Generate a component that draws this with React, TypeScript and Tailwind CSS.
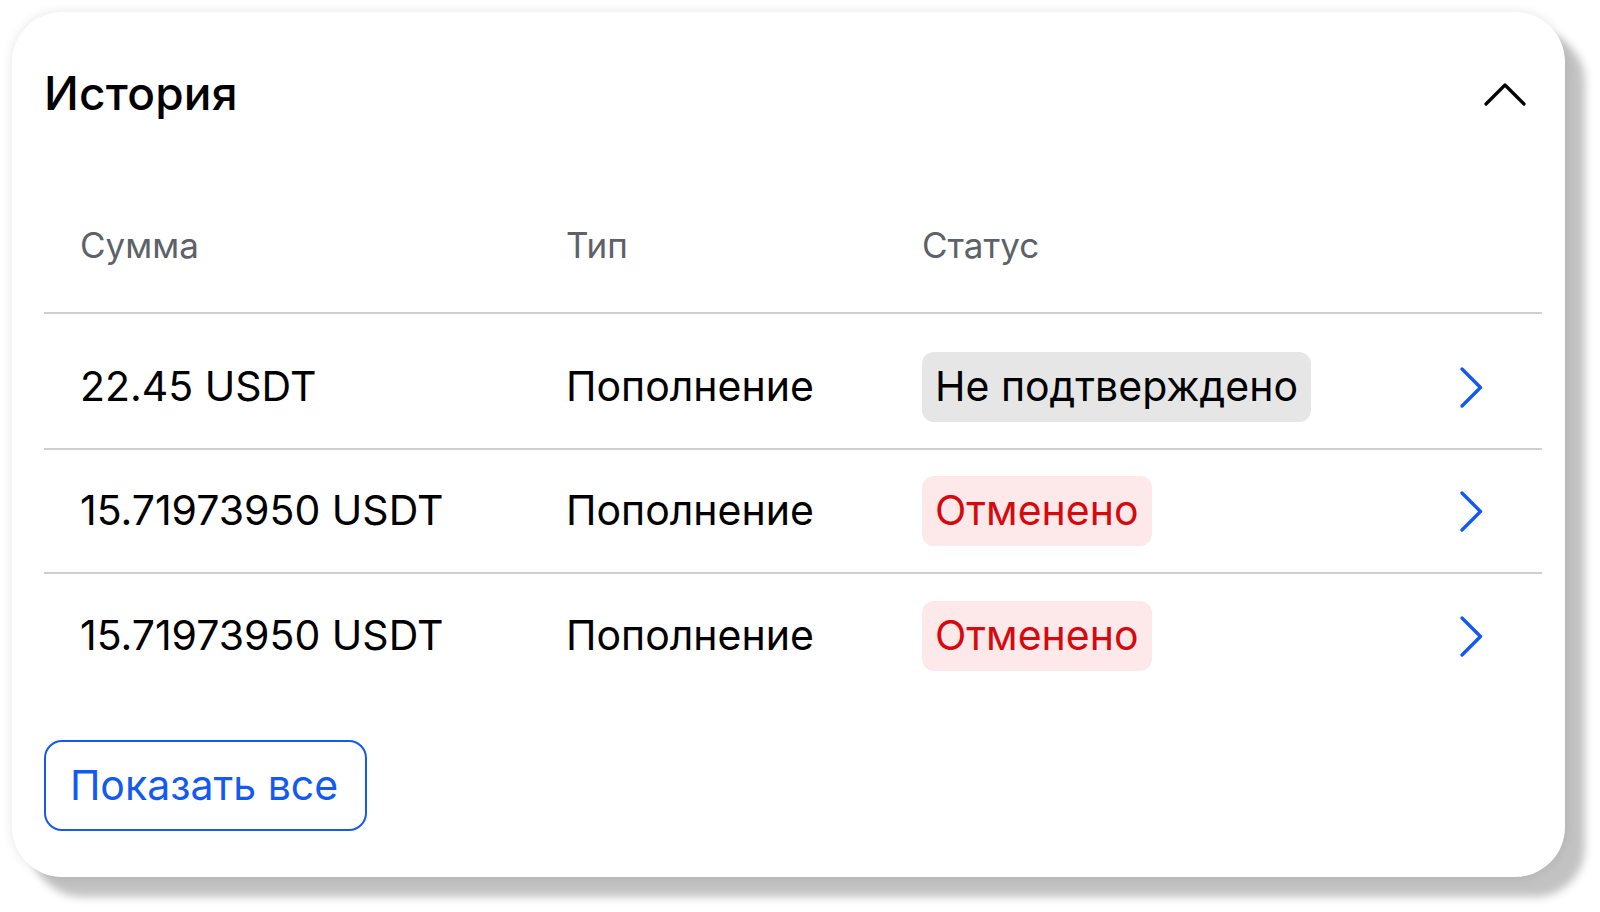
import React from 'react';

const rows = [
  { amount: '22.45 USDT', type: 'Пополнение', status: 'Не подтверждено', kind: 'pending' },
  { amount: '15.71973950 USDT', type: 'Пополнение', status: 'Отменено', kind: 'cancelled' },
  { amount: '15.71973950 USDT', type: 'Пополнение', status: 'Отменено', kind: 'cancelled' },
];

function ChevronRight() {
  return (
    <svg width="25" height="43" viewBox="0 0 25 43" fill="none">
      <polyline points="3,3 21.5,21.5 3,40" stroke="#1459f0" strokeWidth="3.4" strokeLinecap="round" strokeLinejoin="round" />
    </svg>
  );
}

export default function App() {
  return (
    <div className="w-[1600px] h-[912px] bg-white p-3 font-['Inter','Noto_Sans',sans-serif]">
      <div className="w-[1553px] h-[865px] bg-white rounded-[50px] shadow-[0_0_12px_rgba(0,0,0,0.1),20px_20px_8px_rgba(0,0,0,0.24)] pl-8 pr-[23px] flex flex-col">
        {/* Header */}
        <div className="h-[162px] flex items-center justify-between">
          <h2 className="text-[46px] font-medium text-black tracking-[0.2px]">История</h2>
          <button className="mr-[14px] mt-[2px]">
            <svg width="46" height="28" viewBox="0 0 46 28" fill="none">
              <polyline points="4,24 23,5 42,24" stroke="#000" strokeWidth="3.2" strokeLinecap="round" strokeLinejoin="round" />
            </svg>
          </button>
        </div>

        {/* Table head */}
        <div className="h-[140px] pt-[4px] flex items-center border-b-2 border-[#cfcfcf] pl-9 text-[35px] text-[#5d6168]">
          <div className="w-[486px]">Сумма</div>
          <div className="w-[356px]">Тип</div>
          <div>Статус</div>
        </div>

        {/* Rows */}
        <div className="pt-[12px]">
          {rows.map((r, i) => (
            <div
              key={i}
              className={`h-[124px] flex items-center pl-9 pr-[58px] text-[41px] text-black ${i < rows.length - 1 ? 'border-b-2 border-[#cfcfcf]' : ''}`}
            >
              <div className="w-[486px]">{r.amount}</div>
              <div className="w-[356px]">{r.type}</div>
              <div className="flex-1">
                <span
                  className={`inline-flex items-center h-[70px] px-[13px] rounded-[12px] ${r.kind === 'pending' ? 'bg-[#e6e6e6] text-black' : 'bg-[#fde9ea] text-[#d40a0f]'}`}
                >
                  {r.status}
                </span>
              </div>
              <ChevronRight />
            </div>
          ))}
        </div>

        <div className="mt-[42px]">
          <button className="h-[91px] w-[323px] border-[2.5px] border-[#1459f0] rounded-[18px] text-[41px] text-[#1459f0] pr-[3px]">
            Показать все
          </button>
        </div>
      </div>
    </div>
  );
}
